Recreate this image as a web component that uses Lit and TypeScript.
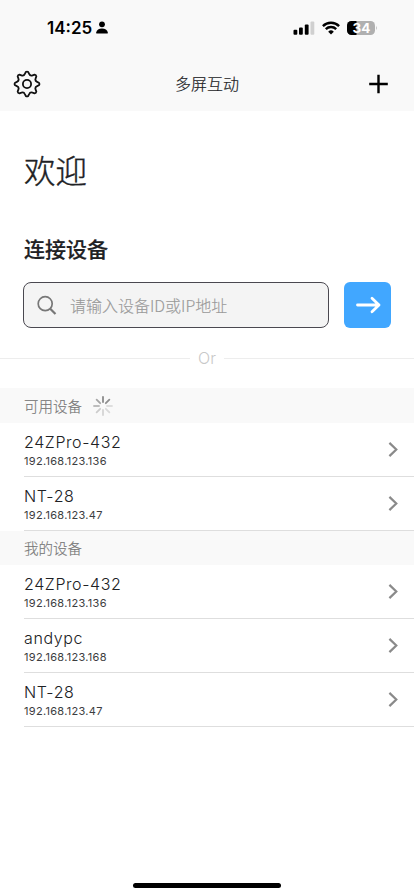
import { LitElement, html, svg, css } from "lit";
import { customElement, property } from "lit/decorators.js";

const gearPath = () => {
  const c = 14;
  const at = (r: number, deg: number) => {
    const a = ((deg - 90) * Math.PI) / 180;
    return `${(c + r * Math.cos(a)).toFixed(2)} ${(c + r * Math.sin(a)).toFixed(2)}`;
  };
  let d = `M${at(12, -6)}`;
  for (let i = 0; i < 8; i++) {
    const t = i * 45;
    d += `Q${at(12.9, t)} ${at(12, t + 6)}`;
    d += `L${at(10.3, t + 12)}Q${at(8.3, t + 22.5)} ${at(10.3, t + 33)}L${at(12, t + 39)}`;
  }
  return d + "Z";
};

@customElement("device-row")
class DeviceRow extends LitElement {
  @property() name = "";
  @property() ip = "";
  static styles = css`
    :host { display: flex; align-items: center; justify-content: space-between; box-sizing: border-box; height: 54px; margin-left: 24px; padding-right: 15px; border-bottom: 1px solid #dedede; }
    .name { font-size: 16px; font-weight: 360; line-height: 20px; letter-spacing: 0.6px; color: #202124; }
    .ip { font-size: 11px; line-height: 14px; letter-spacing: 0.3px; color: #3c3d40; margin-top: 2px; }
    svg { display: block; }
  `;
  render() {
    return html`<div><div class="name">${this.name}</div><div class="ip">${this.ip}</div></div>
      <svg width="12" height="18" viewBox="0 0 12 18" fill="none" stroke="#8a8a8a" stroke-width="2.200"><path d="M2.400 1.900L9.300 8.500L2.400 15.100" /></svg>`;
  }
}

@customElement("app-root")
class AppRoot extends LitElement {
  static styles = css`
    :host { display: flex; flex-direction: column; width: 414px; height: 896px; background: #fff; font-family: Inter, "Noto Sans CJK SC", sans-serif; color: #202124; overflow: hidden; }
    svg { display: block; }
    .top { height: 111px; background: #f9f9f9; flex: none; }
    .status { display: flex; justify-content: space-between; align-items: center; height: 56px; padding: 0 36px 0 47px; }
    .clock { display: flex; align-items: center; gap: 4px; font-size: 17px; font-weight: 600; color: #000; }
    .clock svg { margin-bottom: 1px; }
    .signals { display: flex; align-items: center; gap: 7px; }
    .battery { font-size: 13.5px; font-weight: 700; }
    .nav { display: grid; grid-template-columns: 28px 1fr 28px; align-items: center; height: 56px; padding: 0 22px 0 13px; }
    .title { text-align: center; font-size: 16px; font-weight: 300; padding: 0 0 2px 9px; -webkit-text-stroke: 0.2px; }
    .cjk { font-family: "Noto Sans CJK SC", sans-serif; }
    h1 { margin: 34px 0 0 24px; font-size: 31.5px; line-height: 48px; font-weight: 300; -webkit-text-stroke: 0.4px; flex: none; }
    h2 { margin: 39px 0 0 24px; font-size: 21px; line-height: 32px; font-weight: 500; -webkit-text-stroke: 0.2px; flex: none; }
    .connect { display: flex; gap: 15px; height: 46px; margin: 18px 23px 0; flex: none; }
    .field { flex: 1; display: flex; align-items: center; gap: 13px; box-sizing: border-box; border: 1px solid #4a4850; border-radius: 8px; background: #f4f4f4; padding-left: 13px; font-size: 16px; font-weight: 300; color: #999; }
    .field span { padding-bottom: 1px; -webkit-text-stroke: 0.15px; }
    .go { width: 47px; border-radius: 6px; background: #41a7ff; display: grid; place-items: center; }
    .or { display: flex; align-items: center; gap: 8px; height: 24px; margin-top: 18px; font-size: 16px; font-weight: 350; color: #c8c8c8; flex: none; }
    .or::before, .or::after { content: ""; flex: 1; height: 1px; background: #ededed; }
    .section { display: flex; align-items: center; gap: 11px; box-sizing: border-box; height: 35px; padding-left: 24px; background: #f9f9f9; font-size: 14.5px; font-weight: 300; color: #777; -webkit-text-stroke: 0.15px; flex: none; }
    .available { margin-top: 18px; }
    .mine { height: 34px; padding-bottom: 1px; }
    .home { width: 148px; height: 5px; border-radius: 3px; background: #000; margin: auto auto 8px; }
  `;

  render() {
    return html`
      <div class="top">
        <div class="status">
          <div class="clock"><span>14:25</span>
            <svg width="12" height="13" viewBox="0 0 12 13"><circle cx="6" cy="3.300" r="2.900" /><path d="M.3 12.500V11.300C.5 8.900 3 7.500 6 7.500S11.500 8.900 11.700 11.300V12.500Z" /></svg>
          </div>
          <div class="signals">
            <svg width="22" height="14" viewBox="0 0 22 14"><rect x="0.500" y="8.800" width="3.800" height="5" rx="1" /><rect x="6" y="6.500" width="3.800" height="7.300" rx="1" /><rect x="11.800" y="3.500" width="3.800" height="10.300" rx="1" /><rect x="17.500" y="0.500" width="3.800" height="13.300" rx="1" fill="#d0d0d0" /></svg>
            <svg width="18" height="14" viewBox="0 0 18 14" fill="none" stroke="#000" stroke-width="2.400"><path d="M.9 5.100A11.500 11.500 0 0 1 17.100 5.100" /><path d="M3.800 8.100A7.400 7.400 0 0 1 14.200 8.100" /><path d="M9 13.500L6.200 10.700A4 4 0 0 1 11.800 10.700Z" fill="#000" stroke="none" /></svg>
            <svg class="battery" width="31" height="14" viewBox="0 0 31 14"><clipPath id="cell"><rect width="28" height="14" rx="4.500" /></clipPath><g clip-path="url(#cell)"><rect width="28" height="14" fill="#b0b0b0" /><rect width="9.500" height="14" /></g><path d="M29.200 4.800Q30.800 7 29.200 9.200Z" fill="#b0b0b0" /><text x="14.500" y="11.900" text-anchor="middle" fill="#fff">34</text></svg>
          </div>
        </div>
        <div class="nav">
          <svg width="28" height="28" viewBox="0 0 28 28" fill="none" stroke="#111" stroke-width="1.800" stroke-linejoin="round"><path d=${gearPath()} /><circle cx="14" cy="14" r="4.100" /></svg>
          <div class="title cjk">多屏互动</div>
          <svg width="28" height="28" viewBox="0 0 28 28" stroke="#000" stroke-width="2.400"><path d="M5.200 14H23.800M14.500 4.700V23.300" /></svg>
        </div>
      </div>
      <h1 class="cjk">欢迎</h1>
      <h2 class="cjk">连接设备</h2>
      <div class="connect">
        <div class="field cjk">
          <svg width="20" height="21" viewBox="0 0 20 21" fill="none" stroke="#777" stroke-width="1.700"><circle cx="8.200" cy="8.700" r="7" /><path d="M13.200 13.700L18.500 19" stroke-width="2.200" /></svg>
          <span>请输入设备ID或IP地址</span>
        </div>
        <div class="go"><svg width="26" height="18" viewBox="0 0 26 18" fill="none" stroke="#fff" stroke-width="2.800" stroke-linecap="round" stroke-linejoin="round"><path d="M2.500 9H24M17 2.200L24 9L17 15.800" /></svg></div>
      </div>
      <div class="or"><span>Or</span></div>
      <div class="section available cjk"><span>可用设备</span>
        <svg width="20" height="20" viewBox="0 0 20 20" stroke-width="1.800" stroke-linecap="round">
          ${["#8a8a8a", "#8f8f8f", "#dedede", "#dadada", "#d4d4d4", "#cccccc", "#bdbdbd", "#a6a6a6"].map(
            (c, i) => svg`<path d="M10 1V6" stroke=${c} transform="rotate(${i * 45} 10 10)" />`,
          )}
        </svg>
      </div>
      <device-row name="24ZPro-432" ip="192.168.123.136"></device-row>
      <device-row name="NT-28" ip="192.168.123.47"></device-row>
      <div class="section mine cjk"><span>我的设备</span></div>
      <device-row name="24ZPro-432" ip="192.168.123.136"></device-row>
      <device-row name="andypc" ip="192.168.123.168"></device-row>
      <device-row name="NT-28" ip="192.168.123.47"></device-row>
      <div class="home"></div>
    `;
  }
}
